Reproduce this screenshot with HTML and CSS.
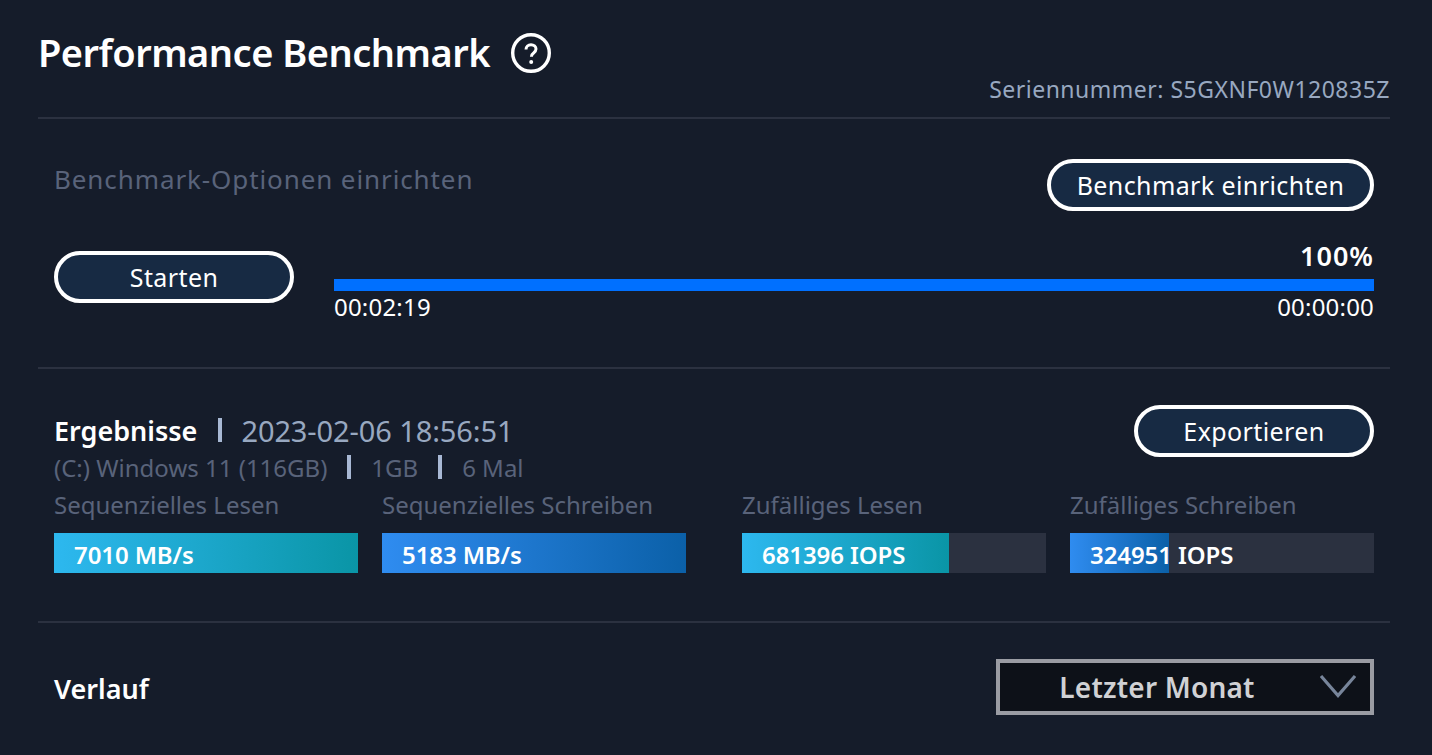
FILE: index.html
```html
<!DOCTYPE html>
<html lang="de">
  <head>
    <meta charset="UTF-8" />
    <title>Performance Benchmark</title>
    <link rel="stylesheet" href="styles.css">
  </head>
  <body>
    <header class="header">
      <div class="title-row">
        <h1 class="title">Performance Benchmark</h1>
        <svg class="help-icon" width="42" height="42" viewBox="0 0 42 42">
          <circle cx="21" cy="21" r="18.3" fill="none" stroke="#fff" stroke-width="3.4" />
          <path d="M16 17.5c0-3 2.2-4.7 5-4.7s5 1.8 5 4.3c0 1.8-1 2.8-2.4 3.9-1.4 1-2.2 2-2.2 3.7" fill="none" stroke="#fff" stroke-width="3" />
          <circle cx="21.2" cy="30" r="2" fill="#fff" />
        </svg>
      </div>
      <div class="serial">Seriennummer: S5GXNF0W120835Z</div>
    </header>

    <section class="section setup">
      <div class="setup-top">
        <div class="setup-label">Benchmark-Optionen einrichten</div>
        <button class="pill pill-setup">Benchmark einrichten</button>
      </div>
      <div class="run-row">
        <button class="pill pill-start">Starten</button>
        <div class="progress">
          <div class="progress-percent">100%</div>
          <div class="progress-bar"></div>
          <div class="progress-times">
            <span>00:02:19</span>
            <span>00:00:00</span>
          </div>
        </div>
      </div>
    </section>

    <section class="section results">
      <div class="results-top">
        <div>
          <div class="results-head">
            <strong class="results-title">Ergebnisse</strong>
            <span class="sep sep-head"></span>
            <span class="results-date">2023-02-06 18:56:51</span>
          </div>
          <div class="results-info">
            <span>(C:) Windows 11 (116GB)</span>
            <span class="sep"></span>
            <span>1GB</span>
            <span class="sep"></span>
            <span>6 Mal</span>
          </div>
        </div>
        <button class="pill pill-export">Exportieren</button>
      </div>
      <div class="metrics">
        <div class="metric-pair">
          <div class="metric">
            <div class="metric-label">Sequenzielles Lesen</div>
            <div class="metric-track">
              <div class="metric-fill fill-read" style="width: 100%"></div>
              <span class="metric-value">7010 MB/s</span>
            </div>
          </div>
          <div class="metric">
            <div class="metric-label">Sequenzielles Schreiben</div>
            <div class="metric-track">
              <div class="metric-fill fill-write" style="width: 100%"></div>
              <span class="metric-value">5183 MB/s</span>
            </div>
          </div>
        </div>
        <div class="metric-pair">
          <div class="metric">
            <div class="metric-label">Zufälliges Lesen</div>
            <div class="metric-track">
              <div class="metric-fill fill-read" style="width: 68%"></div>
              <span class="metric-value">681396 IOPS</span>
            </div>
          </div>
          <div class="metric">
            <div class="metric-label">Zufälliges Schreiben</div>
            <div class="metric-track">
              <div class="metric-fill fill-write" style="width: 32.5%"></div>
              <span class="metric-value">324951 IOPS</span>
            </div>
          </div>
        </div>
      </div>
    </section>

    <section class="history">
      <div class="history-title">Verlauf</div>
      <div class="select">
        <span class="select-text">Letzter Monat</span>
        <svg class="select-arrow" width="36" height="24" viewBox="0 0 36 24">
          <path d="M1 2l17 19.5L35 2" fill="none" stroke="#77859a" stroke-width="3.2" />
        </svg>
      </div>
    </section>
  </body>
</html>
```

FILE: styles.css
```css
* {
  margin: 0;
  padding: 0;
  box-sizing: border-box;
}

body {
  width: 1432px;
  height: 755px;
  overflow: hidden;
  padding: 0 42px 0 38px;
  background: #151c2a;
  font-family: "Noto Sans", "Open Sans", sans-serif;
  color: #fff;
}

.header {
  height: 119px;
  padding-top: 29px;
  border-bottom: 2px solid #2b3140;
}

.title-row {
  display: flex;
  align-items: center;
  height: 48px;
}

.title {
  font-size: 38px;
  line-height: 46px;
  padding-bottom: 2px;
  font-weight: 600;
  letter-spacing: -0.5px;
}

.help-icon {
  margin-left: 20px;
}

.serial {
  text-align: right;
  font-size: 23px;
  line-height: 24px;
  letter-spacing: 0.5px;
  color: #98a8c0;
}

.section {
  border-bottom: 2px solid #2b3140;
  padding: 0 16px;
}

.setup {
  height: 250px;
  padding-top: 40px;
}

.setup-top {
  display: flex;
  justify-content: space-between;
  height: 92px;
}

.setup-label {
  font-size: 26px;
  line-height: 40px;
  letter-spacing: 0.9px;
  color: #59637a;
}

.pill {
  height: 52px;
  border: 4px solid #fff;
  border-radius: 26px;
  background: #172a43;
  color: #fff;
  font-family: inherit;
  font-size: 25px;
  letter-spacing: 0.4px;
}

.pill-setup {
  width: 327px;
}

.pill-start,
.pill-export {
  width: 240px;
}

.run-row {
  display: flex;
  gap: 40px;
}

.progress {
  flex: 1;
}

.progress-percent {
  height: 28px;
  text-align: right;
  font-size: 27px;
  line-height: 10px;
  letter-spacing: 1px;
  font-weight: 600;
}

.progress-bar {
  height: 12px;
  background: #0070ff;
}

.progress-times {
  display: flex;
  justify-content: space-between;
  font-size: 24px;
  line-height: 32px;
  letter-spacing: 0.2px;
}

.results {
  height: 254px;
  padding-top: 36px;
}

.results-top {
  display: flex;
  justify-content: space-between;
}

.results-head {
  display: flex;
  align-items: center;
  height: 50px;
}

.results-title {
  font-size: 27px;
  font-weight: 600;
}

.results-date {
  font-size: 29px;
  letter-spacing: -0.1px;
  color: #98a8c0;
}

.sep {
  display: inline-block;
  width: 4px;
  height: 24px;
  margin: 0 20px;
  background: #a8b8d4;
}

.sep-head {
  margin: 0 19px 0 21px;
}

.results-info {
  display: flex;
  align-items: center;
  height: 24px;
  font-size: 24px;
  color: #59637a;
}

.metrics {
  display: flex;
  gap: 56px;
  margin-top: 10px;
}

.metric-pair {
  flex: 1;
  display: flex;
  gap: 24px;
}

.metric {
  flex: 1;
}

.metric-label {
  height: 44px;
  font-size: 24px;
  line-height: 32px;
  color: #59637a;
}

.metric-track {
  position: relative;
  height: 40px;
  background: #2b3140;
}

.metric-fill {
  height: 100%;
}

.fill-read {
  background: linear-gradient(90deg, #2db8ef, #0a95a6);
}

.fill-write {
  background: linear-gradient(90deg, #2f8cf0, #0b60a8);
}

.metric-value {
  position: absolute;
  left: 20px;
  top: 0;
  font-size: 24px;
  line-height: 44px;
  letter-spacing: -0.1px;
  font-weight: 600;
}

.history {
  display: flex;
  justify-content: space-between;
  align-items: center;
  padding: 0 16px;
  height: 128px;
}

.history-title {
  font-size: 27px;
  padding-top: 2px;
  font-weight: 600;
}

.select {
  position: relative;
  width: 378px;
  height: 56px;
  border: 4px solid #9a9ca3;
  background: #0d1118;
  display: flex;
  align-items: center;
  justify-content: center;
  padding-right: 56px;
}

.select-text {
  font-size: 28px;
  letter-spacing: 0.2px;
  font-weight: 600;
  color: #d0d1d4;
}

.select-arrow {
  position: absolute;
  right: 14px;
  top: 11px;
}
```
